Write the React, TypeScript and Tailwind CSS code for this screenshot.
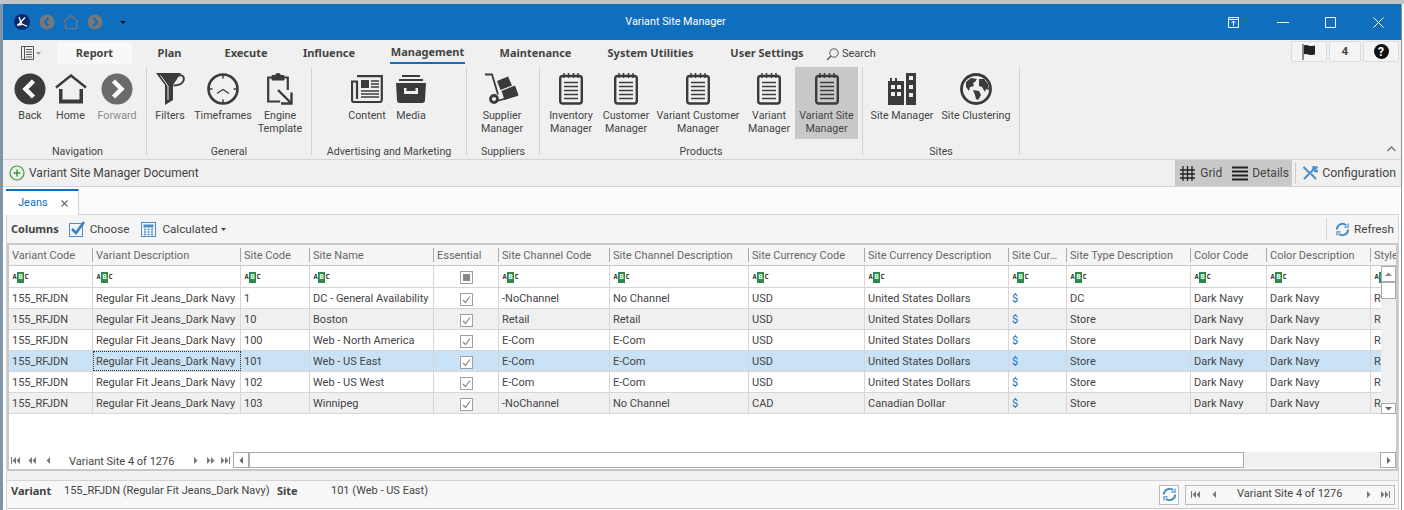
import React from "react";

const ROW = "grid grid-cols-[84px_148px_69px_124px_65px_111px_139px_116px_144px_58px_124px_76px_104px_31px] w-[1393px]";
const BOLD = "font-bold text-[11px] [font-family:'Noto_Sans',sans-serif]";
const cols = ["Variant Code","Variant Description","Site Code","Site Name","Essential","Site Channel Code","Site Channel Description","Site Currency Code","Site Currency Description","Site Cur…","Site Type Description","Color Code","Color Description","Style"];
const data = [
  ["1","DC - General Availability","-NoChannel","No Channel","USD","United States Dollars","DC"],
  ["10","Boston","Retail","Retail","USD","United States Dollars","Store"],
  ["100","Web - North America","E-Com","E-Com","USD","United States Dollars","Store"],
  ["101","Web - US East","E-Com","E-Com","USD","United States Dollars","Store"],
  ["102","Web - US West","E-Com","E-Com","USD","United States Dollars","Store"],
  ["103","Winnipeg","-NoChannel","No Channel","CAD","Canadian Dollar","Store"],
];

const Abc = () => (
  <span className="inline-flex items-center h-[11px] text-[7px] leading-none font-bold text-[#333] [font-family:'DejaVu_Sans_Mono',monospace]">
    <span className="w-[5px] text-center">A</span>
    <span className="w-[7px] h-[11px] flex items-center justify-center bg-[#2e8b47] text-white">B</span>
    <span className="w-[5px] text-center">C</span>
  </span>
);

const Back = ({ fill = "#3d3b3a", flip = false }: { fill?: string; flip?: boolean }) => (
  <svg width="32" height="32" viewBox="0 0 32 32">
    <circle cx="16" cy="16" r="15.500" fill={fill} />
    <path d={flip ? "M12.500 8 20.500 16l-8 8" : "M19.500 8 11.500 16l8 8"} fill="none" stroke="#fff" strokeWidth="4.500" />
  </svg>
);
const Home = () => (
  <svg width="32" height="30" viewBox="0 0 32 30" fill="#3d3b3a">
    <path d="M1 13.500 16 1.500l15 12" fill="none" stroke="#3d3b3a" strokeWidth="2.400" />
    <path d="M4 15h3.500v10.500h17V15H28v14.500H4z" />
  </svg>
);
const Funnel = () => (
  <svg width="29" height="32" viewBox="0 0 29 32">
    <path d="M0 0h25L17 12v15l-8 5V12z" fill="#3d3b3a" />
    <path d="M4.500 2.500 12 13v14" fill="none" stroke="#f0f0f0" strokeWidth="1" />
    <path d="M23 2.500c4-1 5.500 2 4.500 5-1 3-5 5-10 5" fill="none" stroke="#3d3b3a" strokeWidth="2" />
  </svg>
);
const Clock = () => (
  <svg width="32" height="32" viewBox="0 0 32 32" fill="none" stroke="#3d3b3a">
    <circle cx="16" cy="16" r="14.500" strokeWidth="2.600" />
    <path d="M16 2v3.500M16 26.500V30M2 16h3.500M26.500 16H30" strokeWidth="1.500" />
    <path d="M10 20.500l6-4 6 4" strokeWidth="1.200" />
  </svg>
);
const Clip = () => (
  <svg width="26" height="32" viewBox="0 0 26 32" fill="none" stroke="#3d3b3a">
    <path d="M5 4.500H1.200v24h12M17 4.500h3.800V17" strokeWidth="2.200" />
    <path d="M5 4V2.500h3.500a2.500 2 0 0 1 5 0H17V7H5z" fill="#3d3b3a" strokeWidth="1" />
    <path d="M11 17l12.500 12.500M24.500 19.500V30.500H14" strokeWidth="2.400" />
  </svg>
);
const News = () => (
  <svg width="32" height="28" viewBox="0 0 32 28" fill="none" stroke="#3d3b3a">
    <path d="M6 1.200h24.800V25a2 2 0 0 1-2 2H3a2 2 0 0 1-2-2V6.500h5V24" strokeWidth="2.200" />
    <rect x="10" y="5" width="8" height="8" fill="#3d3b3a" strokeWidth="0" />
    <path d="M20 6h8M20 9h8M20 12h8M10 16h18M10 19h18M10 22h18" strokeWidth="1.400" />
  </svg>
);
const Drawer = () => (
  <svg width="32" height="28" viewBox="0 0 32 28">
    <path d="M7 0h18v2H7zM4 4h24v2H4z" fill="#3d3b3a" />
    <path d="M1 8h30l-1 17a3 3 0 0 1-3 3H5a3 3 0 0 1-3-3z" fill="#3d3b3a" />
    <path d="M9 13v6h14v-6h-2.500v3h-9v-3z" fill="#f0f0f0" />
  </svg>
);
const Truck = () => (
  <svg width="34" height="32" viewBox="0 0 34 32">
    <path d="M0 1.500h7l6 20" fill="none" stroke="#3d3b3a" strokeWidth="1.800" />
    <path d="M12 28 33 22" stroke="#3d3b3a" strokeWidth="1.800" />
    <circle cx="9" cy="26" r="3.500" fill="none" stroke="#3d3b3a" strokeWidth="2.800" />
    <path d="M12 8 23 3.500l4 9L15.500 17zM16.500 18 30 12.500l3.500 9.500L19.500 27z" fill="#3d3b3a" />
  </svg>
);
const Note = () => (
  <svg width="24" height="32" viewBox="0 0 24 32" fill="none" stroke="#3d3b3a">
    <rect x="1.200" y="3" width="21.600" height="27.500" rx="2.500" strokeWidth="2.400" />
    <path d="M5 0v5M9.500 0v5M14.500 0v5M19 0v5" strokeWidth="1.500" />
    <path d="M5 9.500h14M5 13.500h14M5 17.500h14M5 21.500h14M5 25.500h14" strokeWidth="1.600" />
  </svg>
);
const Build = () => (
  <svg width="28" height="32" viewBox="0 0 28 32">
    <path fillRule="evenodd" d="M0 8h2V5h2v3h3V5h2v3h7v24H0zM3 12v4h4v-4zM9 12v4h4v-4zM3 19v4h4v-4zM9 19v4h4v-4z" fill="#3d3b3a" />
    <path fillRule="evenodd" d="M18 0h10v32H18zM21 3v4h4V3zM21 12v4h4v-4zM21 20v4h4v-4z" fill="#3d3b3a" />
  </svg>
);
const Globe = () => (
  <svg width="32" height="32" viewBox="0 0 32 32">
    <circle cx="16" cy="16" r="14.500" fill="#f0f0f0" stroke="#3d3b3a" strokeWidth="2.800" />
    <path d="M6 9l5-4 6 1-2 3-2 1 1 3-4 1-1 4-3-4zM13 17l6 1 2 4-3 5-2-1-1-4zM19 6l5 0 4 5 1 6-3-1-1 3-3-5-3-1z" fill="#3d3b3a" />
  </svg>
);

const Big = ({ icon, label, w, gray, active }: { icon: React.ReactNode; label: React.ReactNode; w: string; gray?: boolean; active?: boolean }) => (
  <div className={`flex flex-col items-center pt-[5px] h-[72px] ${w} ${active ? "bg-[#c8c8c8]" : ""}`}>
    <div className="h-[33px] flex items-center justify-center">{icon}</div>
    <div className={`mt-[4px] text-center text-[10.700px] leading-[13px] whitespace-nowrap ${gray ? "text-[#8a8a8a]" : "text-[#444]"}`}>{label}</div>
  </div>
);
const Group = ({ title, w, pad, children }: { title: string; w: string; pad: string; children: React.ReactNode }) => (
  <div className={`flex flex-col h-[88px] border-r border-[#d2d2d2] ${w}`}>
    <div className={`flex h-[72px] ${pad}`}>{children}</div>
    <div className="mt-auto mb-[-5px] text-center text-[10.700px] leading-[16px] text-[#444] whitespace-nowrap">{title}</div>
  </div>
);
const Tab = ({ t, w, active, white }: { t: string; w: string; active?: boolean; white?: boolean }) => (
  <div className={`h-[22px] pt-[1px] shrink-0 flex items-center justify-center whitespace-nowrap ${BOLD} text-[#444] ${w} ${white ? "bg-[#f8f8f8]" : ""} ${active ? "border-b-2 border-[#106ebe]" : ""}`}>{t}</div>
);
const Cell = ({ children, cls = "" }: { children?: React.ReactNode; cls?: string }) => (
  <div className={`h-full border-r border-[#d6d6d6] px-[3px] pt-[2px] flex items-center overflow-hidden whitespace-nowrap ${cls}`}>{children}</div>
);
const Check = () => (
  <span className="w-[13px] h-[13px] border border-[#a0a0a0] bg-white flex items-center justify-center">
    <svg width="9" height="9" viewBox="0 0 9 9" fill="none" stroke="#888" strokeWidth="1.200"><path d="M1 5l2.500 2.500L8 1.500" /></svg>
  </span>
);
const Tri = ({ d, c = "#666" }: { d: "l" | "r" | "u" | "down"; c?: string }) => (
  <svg width="7" height="7" viewBox="0 0 7 7" fill={c}>
    <path d={d === "l" ? "M5 0v7L1.500 3.500z" : d === "r" ? "M2 0v7l3.500-3.500z" : d === "u" ? "M0 5h7L3.500 1.500z" : "M0 2h7L3.500 5.500z"} />
  </svg>
);
const First = () => <svg width="9" height="7" viewBox="0 0 9 7" fill="#777"><path d="M0 0h1v7H0zM5 0v7L1.500 3.500zM9 0v7L5.500 3.500z" /></svg>;
const Prev2 = () => <svg width="8" height="7" viewBox="0 0 8 7" fill="#777"><path d="M4 0v7L0.500 3.500zM8 0v7L4.500 3.500z" /></svg>;
const Prev = () => <svg width="4" height="7" viewBox="0 0 4 7" fill="#777"><path d="M4 0v7L0.500 3.500z" /></svg>;
const Next = () => <svg width="4" height="7" viewBox="0 0 4 7" fill="#777"><path d="M0 0v7l3.500-3.500z" /></svg>;
const Next2 = () => <svg width="8" height="7" viewBox="0 0 8 7" fill="#777"><path d="M0 0v7l3.500-3.500zM4 0v7l3.500-3.500z" /></svg>;
const Last = () => <svg width="9" height="7" viewBox="0 0 9 7" fill="#777"><path d="M0 0v7l3.500-3.500zM4 0v7l3.500-3.500zM8 0h1v7H8z" /></svg>;
const Refresh = ({ s = 15 }: { s?: number }) => (
  <svg width={s} height={s} viewBox="0 0 16 16" fill="none" stroke="#4a90c8" strokeWidth="2.200">
    <path d="M2 8a6 6 0 0 1 10-4.500M14 8a6 6 0 0 1-10 4.500" />
    <path d="M14 1.500v4h-4M2 14.500v-4h4" strokeWidth="1.200" />
  </svg>
);

export default function App() {
  return (
    <div className="w-[1404px] h-[510px] overflow-hidden bg-white text-[12px] text-[#444] [font-family:Roboto,'Noto_Sans',sans-serif]">
      <div className="h-[4px] bg-[#c4c4c4]" />
      <div className="flex h-[506px]">
        <div className="w-[3px] bg-[#7f95a8]" />
        <div className="w-[1398px] flex flex-col bg-[#f0f0f0]">
          {/* title */}
          <div className="h-[36px] shrink-0 bg-[#106ebe] flex items-center relative text-white">
            <div className="flex items-center pl-[11px]">
              <svg width="16" height="16" viewBox="0 0 16 16" fill="none"><circle cx="8" cy="8" r="8" fill="#0b2a6b" /><path d="M5 3c1 3 2 6 3 7 2 1 4 2 5 2M11 3.500 4 11M3 11c2 0 4 0 5-1" stroke="#fff" strokeWidth="1.300" /></svg>
              <svg className="ml-[9px]" width="16" height="16" viewBox="0 0 16 16"><circle cx="8" cy="8" r="7.500" fill="#777" /><path d="M9.500 4 6 8l3.500 4" fill="none" stroke="#106ebe" strokeWidth="2" /></svg>
              <svg className="ml-[8px]" width="16" height="16" viewBox="0 0 16 16" fill="none" stroke="#777"><path d="M0.500 8 8 1.500 15.500 8M2.500 8v6.500h11V8" strokeWidth="1.200" /></svg>
              <svg className="ml-[8px]" width="16" height="16" viewBox="0 0 16 16"><circle cx="8" cy="8" r="7.500" fill="#777" /><path d="M6.500 4 10 8l-3.500 4" fill="none" stroke="#106ebe" strokeWidth="2" /></svg>
              <svg className="ml-[17px]" width="6" height="3" viewBox="0 0 6 3" fill="#111"><path d="M0 0h6L3 3z" /></svg>
            </div>
            <div className="absolute left-[0] w-[1345px] text-center text-[10.800px] pointer-events-none">Variant Site Manager</div>
            <div className="ml-auto flex items-center pr-[17px]">
              <svg width="11" height="11" viewBox="0 0 11 11" fill="none" stroke="#fff"><path d="M0.500 0.500h10v10h-10zM0.500 2.500h10M5.500 9V4M3.500 6l2-2 2 2" /></svg>
              <svg className="ml-[38px]" width="12" height="10" viewBox="0 0 12 10" stroke="#fff"><path d="M0 5.500h12" /></svg>
              <svg className="ml-[36px]" width="11" height="11" viewBox="0 0 11 11" fill="none" stroke="#fff"><path d="M0.500 0.500h10v10h-10z" /></svg>
              <svg className="ml-[37px]" width="11" height="11" viewBox="0 0 11 11" stroke="#fff"><path d="M0.500 0.500l10 10M10.500 0.500l-10 10" /></svg>
            </div>
          </div>
          {/* tabs */}
          <div className="h-[26px] shrink-0 flex items-start pt-[2px] pl-[18px]">
            <div className="w-[22px] h-[22px] flex items-center mr-[14px]">
              <svg width="20" height="14" viewBox="0 0 20 14" fill="none" stroke="#555"><path d="M0.500 0.500h12v13h-12zM3.500 0.500v13M5 3.500h6M5 6h6M5 8.500h6M5 11h6" /><path d="M15 6h5l-2.500 3z" fill="#999" stroke="none" /></svg>
            </div>
            <Tab t="Report" w="w-[75px]" white />
            <Tab t="Plan" w="w-[75px]" />
            <Tab t="Execute" w="w-[78px]" />
            <Tab t="Influence" w="w-[88px]" />
            <Tab t="Management" w="w-[75px] ml-[17px]" active />
            <Tab t="Maintenance" w="w-[141px]" />
            <Tab t="System Utilities" w="w-[89px]" />
            <Tab t="User Settings" w="w-[76px] ml-[34px]" />
            <div className="flex items-center h-[22px] pt-[2px] gap-[3px] ml-[21px]">
              <svg width="13" height="13" viewBox="0 0 13 13" fill="none" stroke="#555"><circle cx="8" cy="5" r="4.200" /><path d="M5 8l-4 4" strokeWidth="1.200" /></svg>
              <span className="text-[11px]">Search</span>
            </div>
            <div className="ml-auto mr-[2px] -mt-[1px] flex gap-[2px]">
              <div className="w-[36px] h-[21px] bg-[#f4f4f4] border border-[#dcdcdc] rounded-[2px] flex items-center justify-center">
                <svg width="16" height="16" viewBox="0 0 16 16" fill="#222"><path d="M1.500 0h1v16h-1zM3 1.500c3-1.500 5 1 8 .5l3-.5v9l-3 .5c-3 .5-5-2-8-.5z" /></svg>
              </div>
              <div className={`w-[32px] h-[21px] bg-[#f4f4f4] border border-[#dcdcdc] rounded-[2px] flex items-center justify-center ${BOLD}`}>4</div>
              <div className="w-[36px] h-[21px] bg-[#f4f4f4] border border-[#dcdcdc] rounded-[2px] flex items-center justify-center">
                <span className="w-[15px] h-[15px] rounded-full bg-[#111] text-white text-[12px] leading-none font-bold flex items-center justify-center">?</span>
              </div>
            </div>
          </div>
          {/* ribbon */}
          <div className="h-[94px] shrink-0 border-b border-[#d4d4d4] flex items-start pt-[1px] pl-[6px] relative">
            <Group title="Navigation" w="w-[138px]" pad="">
              <Big icon={<Back />} label="Back" w="w-[42px]" />
              <Big icon={<Home />} label="Home" w="w-[39px]" />
              <Big icon={<Back fill="#6b6b6b" flip />} label="Forward" w="w-[54px]" gray />
            </Group>
            <Group title="General" w="w-[165px]" pad="">
              <Big icon={<Funnel />} label="Filters" w="w-[46px]" />
              <Big icon={<Clock />} label="Timeframes" w="w-[60px]" />
              <Big icon={<Clip />} label={<>Engine<br />Template</>} w="w-[54px]" />
            </Group>
            <Group title="Advertising and Marketing" w="w-[155px]" pad="pl-[30px]">
              <Big icon={<News />} label="Content" w="w-[50px]" />
              <Big icon={<Drawer />} label="Media" w="w-[38px]" />
            </Group>
            <Group title="Suppliers" w="w-[73px]" pad="pl-[10px]">
              <Big icon={<Truck />} label={<>Supplier<br />Manager</>} w="w-[50px]" />
            </Group>
            <Group title="Products" w="w-[323px]" pad="pl-[3px]">
              <Big icon={<Note />} label={<>Inventory<br />Manager</>} w="w-[56px]" />
              <Big icon={<Note />} label={<>Customer<br />Manager</>} w="w-[54px]" />
              <Big icon={<Note />} label={<>Variant Customer<br />Manager</>} w="w-[90px]" />
              <Big icon={<Note />} label={<>Variant<br />Manager</>} w="w-[52px]" />
              <Big icon={<Note />} label={<>Variant Site<br />Manager</>} w="w-[63px]" active />
            </Group>
            <Group title="Sites" w="w-[157px]" pad="pl-[1px]">
              <Big icon={<Build />} label="Site Manager" w="w-[76px]" />
              <Big icon={<Globe />} label="Site Clustering" w="w-[72px]" />
            </Group>
            <svg className="absolute right-[5px] bottom-[7px]" width="9" height="6" viewBox="0 0 9 6" fill="none" stroke="#777" strokeWidth="1.300"><path d="M0.500 5l4-4 4 4" /></svg>
          </div>
          {/* doc bar */}
          <div className="h-[27px] shrink-0 border-b border-[#d4d4d4] flex items-center pl-[6px]">
            <svg width="16" height="16" viewBox="0 0 16 16" fill="none" stroke="#3a9a3a" strokeWidth="1.200"><circle cx="8" cy="8" r="7" /><path d="M8 4.500v7M4.500 8h7" strokeWidth="1.500" /></svg>
            <span className="ml-[4px] text-[12px]">Variant Site Manager Document</span>
            <div className="ml-auto flex h-full pr-[5px]">
              <div className="flex items-center bg-[#c8c8c8] pl-[5px] h-full w-[117px]">
                <svg width="15" height="15" viewBox="0 0 15 15" stroke="#222" strokeWidth="1.300"><path d="M0 4h15M0 8h15M0 12h15M3 0v15M7.500 0v15M12 0v15" /></svg>
                <span className="ml-[5px]">Grid</span>
                <svg className="ml-[10px]" width="16" height="15" viewBox="0 0 16 15" stroke="#222" strokeWidth="2"><path d="M0 1.500h16M0 5.500h16M0 9.500h16M0 13.500h16" /></svg>
                <span className="ml-[4px]">Details</span>
              </div>
              <div className="w-px bg-[#ccc] ml-[3px] my-[2px]" />
              <div className="flex items-center pl-[6px]">
                <svg width="16" height="16" viewBox="0 0 16 16" fill="none" stroke="#4a8fc8" strokeWidth="2"><path d="M1.500 2l6 6M2 14l6-6 3-3 .5-3 3 .5-2 2 .5 1.500 1.500.5 1.500-1.500M9 9l5 5" /></svg>
                <span className="ml-[4px] text-[12.300px]">Configuration</span>
              </div>
            </div>
          </div>
          {/* document */}
          <div className="flex-1 min-h-0 flex flex-col bg-white pl-[3px] pr-[2px]">
            <div className="h-[28px] shrink-0 flex items-end bg-[#fbfbfb]">
              <div className="w-[73px] h-[26px] border-t-2 border-t-[#106ebe] border-r border-r-[#d4d4d4] flex items-center pl-[12px] bg-white text-[#106ebe] text-[11px]">
                Jeans
                <svg className="ml-[13px]" width="7" height="7" viewBox="0 0 7 7" stroke="#666" strokeWidth="1.100"><path d="M0.500 0.500l6 6M6.500 0.500l-6 6" /></svg>
              </div>
              <div className="flex-1 border-b border-[#d4d4d4]" />
            </div>
            <div className="flex-1 min-h-0 flex flex-col border-x border-[#d4d4d4] bg-[#f0f0f0]">
              {/* toolbar */}
              <div className="h-[28px] shrink-0 flex items-center bg-[#f5f5f5] pl-[4px] text-[11.700px]">
                <span className={BOLD}>Columns</span>
                <svg className="ml-[10px]" width="16" height="16" viewBox="0 0 16 16" fill="none"><rect x="0.500" y="2.500" width="13" height="13" stroke="#4a90c8" /><path d="M3 8l4 4 8-11" stroke="#2f80c8" strokeWidth="2.500" /></svg>
                <span className="ml-[5px] pt-[2px]">Choose</span>
                <svg className="ml-[12px]" width="15" height="15" viewBox="0 0 15 15" fill="none" stroke="#4a90c8"><rect x="0.500" y="0.500" width="14" height="14" /><rect x="3" y="3" width="9" height="2" fill="#4a90c8" /><path d="M3 7.500h2M6.500 7.500h2M10 7.500h2M3 10h2M6.500 10h2M10 10h2M3 12.500h2M6.500 12.500h2M10 12.500h2" strokeWidth="1.300" /></svg>
                <span className="ml-[6px] pt-[2px]">Calculated</span>
                <svg className="ml-[3px]" width="5" height="3" viewBox="0 0 5 3" fill="#444"><path d="M0 0h5L2.500 3z" /></svg>
                <div className="ml-auto h-[22px] border-l border-[#d4d4d4] flex items-center pl-[8px] pr-[4px]">
                  <Refresh />
                  <span className="ml-[4px] pt-[2px]">Refresh</span>
                </div>
              </div>
              {/* grid */}
              <div className="h-[228px] shrink-0 border-2 border-[#c8c8c8] bg-white flex flex-col overflow-hidden text-[11px]">
                <div className="h-[21px] shrink-0 flex items-center bg-[#f5f5f5] border-b border-[#c8c8c8] overflow-hidden">
                  <div className={ROW}>
                    {cols.map((c) => (
                      <div key={c} className="h-[14px] border-r border-[#aaa] px-[3px] pt-[2px] flex items-center text-[#666] whitespace-nowrap overflow-hidden">{c}</div>
                    ))}
                  </div>
                </div>
                <div className="flex flex-1 min-h-0">
                  <div className="w-[1372px] overflow-hidden shrink-0">
                    <div className={`${ROW} h-[22px] border-b border-[#d6d6d6]`}>
                      {cols.map((c, i) => (
                        <Cell key={c} cls={i === 4 ? "justify-center" : ""}>
                          {i === 4 ? <span className="w-[13px] h-[13px] border border-[#a0a0a0] flex items-center justify-center"><span className="w-[7px] h-[7px] bg-[#888]" /></span> : <Abc />}
                        </Cell>
                      ))}
                    </div>
                    {data.map((r, i) => (
                      <div key={i} className={`${ROW} h-[21px] border-b border-[#d6d6d6] ${i === 3 ? "bg-[#c9e2f6]" : i % 2 ? "bg-[#f0f0f0]" : "bg-white"}`}>
                        <Cell>155_RFJDN</Cell>
                        <Cell cls={i === 3 ? "outline-1 outline-dotted outline-[#333] -outline-offset-1" : ""}>Regular Fit Jeans_Dark Navy</Cell>
                        <Cell>{r[0]}</Cell>
                        <Cell>{r[1]}</Cell>
                        <Cell cls="justify-center"><Check /></Cell>
                        <Cell>{r[2]}</Cell>
                        <Cell>{r[3]}</Cell>
                        <Cell>{r[4]}</Cell>
                        <Cell>{r[5]}</Cell>
                        <Cell cls="text-[#106ebe]">$</Cell>
                        <Cell>{r[6]}</Cell>
                        <Cell>Dark Navy</Cell>
                        <Cell>Dark Navy</Cell>
                        <Cell>R</Cell>
                      </div>
                    ))}
                  </div>
                  <div className="w-[16px] h-[148px] flex flex-col bg-[#f0f0f0]">
                    <div className="h-[16px] border border-[#aaa] bg-white flex items-center justify-center"><Tri d="u" c="#888" /></div>
                    <div className="h-[17px] border border-[#aaa] bg-white" />
                    <div className="flex-1" />
                    <div className="h-[11px] border border-[#aaa] bg-white flex items-center justify-center"><Tri d="down" c="#666" /></div>
                  </div>
                </div>
                {/* pager row */}
                <div className="h-[18px] shrink-0 flex items-center bg-white">
                  <div className="w-[224px] pl-[2px] flex items-center">
                    <First /><span className="ml-[8px] flex"><Prev2 /></span><span className="ml-[10px] flex"><Prev /></span>
                    <span className="ml-[19px] w-[125px] pt-[4px] text-[#444] whitespace-nowrap">Variant Site 4 of 1276</span>
                    <Next /><span className="ml-[9px] flex"><Next2 /></span><span className="ml-[6px] flex"><Last /></span>
                  </div>
                  <div className="flex-1 h-[16px] flex bg-[#f0f0f0]">
                    <div className="w-[16px] border border-[#aaa] bg-white flex items-center justify-center"><Tri d="l" /></div>
                    <div className="w-[995px] border border-[#aaa] bg-white" />
                    <div className="flex-1" />
                    <div className="w-[16px] border border-[#aaa] bg-white flex items-center justify-center"><Tri d="r" /></div>
                  </div>
                </div>
              </div>
              <div className="h-[9px] shrink-0 bg-[#f0f0f0]" />
              {/* details */}
              <div className="h-[28px] shrink-0 border-t border-[#d4d4d4] bg-[#f7f7f7] flex items-center pl-[4px] whitespace-nowrap text-[11px]">
                <span className={`${BOLD} w-[53px] mb-[6px]`}>Variant</span>
                <span className="w-[213px] mb-[6px]">155_RFJDN (Regular Fit Jeans_Dark Navy)</span>
                <span className={`${BOLD} w-[54px] mb-[6px]`}>Site</span>
                <span className="mb-[6px]">101 (Web - US East)</span>
                <div className="ml-auto flex items-center gap-[6px] pr-[3px]">
                  <div className="w-[20px] h-[20px] border border-[#bbb] bg-white flex items-center justify-center"><Refresh /></div>
                  <div className="w-[210px] h-[20px] border border-[#bbb] bg-[#f7f7f7] flex items-center pl-[5px]">
                    <First /><span className="ml-[12px] flex"><Prev /></span>
                    <span className="ml-[21px] w-[130px] text-[#444]">Variant Site 4 of 1276</span>
                    <Next /><span className="ml-[10px] flex"><Last /></span>
                  </div>
                </div>
              </div>
              <div className="flex-1 border-t border-[#c8c8c8] bg-white mx-[1px]" />
            </div>
          </div>
        </div>
        <div className="w-[1px] bg-[#7f95a8]" />
        <div className="w-[2px] bg-white" />
      </div>
    </div>
  );
}
